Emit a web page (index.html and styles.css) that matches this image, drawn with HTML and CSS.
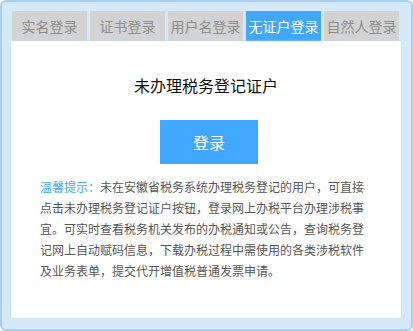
FILE: index.html
```html
<!DOCTYPE html>
<html lang="zh-CN">

<head>
    <meta charset="UTF-8">
    <meta name="viewport" content="width=device-width, initial-scale=1.0">
    <title>无证户登录</title>
    <link rel="stylesheet" href="styles.css">
</head>

<body>

    <div class="loginBox">
        <div class="tabs">
            <div class="tab">实名登录</div>
            <div class="tab">证书登录</div>
            <div class="tab">用户名登录</div>
            <div class="tab active">无证户登录</div>
            <div class="tab">自然人登录</div>
        </div>

        <div class="panel">
            <h3 class="title">未办理税务登记证户</h3>
            <button class="loginBtn">登录</button>
            <p class="tips"><span class="tipsLabel">温馨提示：</span>未在安徽省税务系统办理税务登记的用户，可直接点击未办理税务登记证户按钮，登录网上办税平台办理涉税事宜。可实时查看税务机关发布的办税通知或公告，查询税务登记网上自动赋码信息，下载办税过程中需使用的各类涉税软件及业务表单，提交代开增值税普通发票申请。</p>
        </div>
    </div>

</body>

</html>
```

FILE: styles.css
```css
body {
    font-family: "Noto Sans CJK SC", "Liberation Sans", sans-serif;
    margin: 0;
    padding: 0;
}

.loginBox {
    width: 413px;
    height: 331px;
    box-sizing: border-box;
    border: 2px solid #a7d0f6;
    border-radius: 6px;
    background-color: #d6e9f9;
    padding: 9px 10px 11px 9px;
    display: flex;
    flex-direction: column;
}

.tabs {
    display: flex;
    gap: 3px;
    margin-left: 1px;
}

.tab {
    width: 75px;
    height: 30px;
    line-height: 30px;
    text-align: center;
    font-size: 14px;
    color: #8c8c8c;
    background-color: #d3d3d3;
    white-space: nowrap;
}

.tab.active {
    background-color: #40a9ff;
    color: white;
}

.panel {
    flex: 1;
    background-color: white;
    border-radius: 0 0 3px 3px;
    box-shadow: 0 0 2px #bcdcf6;
    display: flex;
    flex-direction: column;
    align-items: center;
    padding-top: 34px;
}

.title {
    margin: 0;
    font-size: 16px;
    font-weight: normal;
    line-height: 20px;
    color: #111;
}

.loginBtn {
    margin: 25px 0 0 6px;
    width: 98px;
    height: 44px;
    border: none;
    background-color: #40a9ff;
    color: white;
    font-family: inherit;
    font-size: 16px;
}

.tips {
    width: 325px;
    margin: 12px 0 0 29px;
    align-self: flex-start;
    font-size: 12px;
    line-height: 21px;
    color: #555;
}

.tipsLabel {
    color: #40a9ff;
}
```
